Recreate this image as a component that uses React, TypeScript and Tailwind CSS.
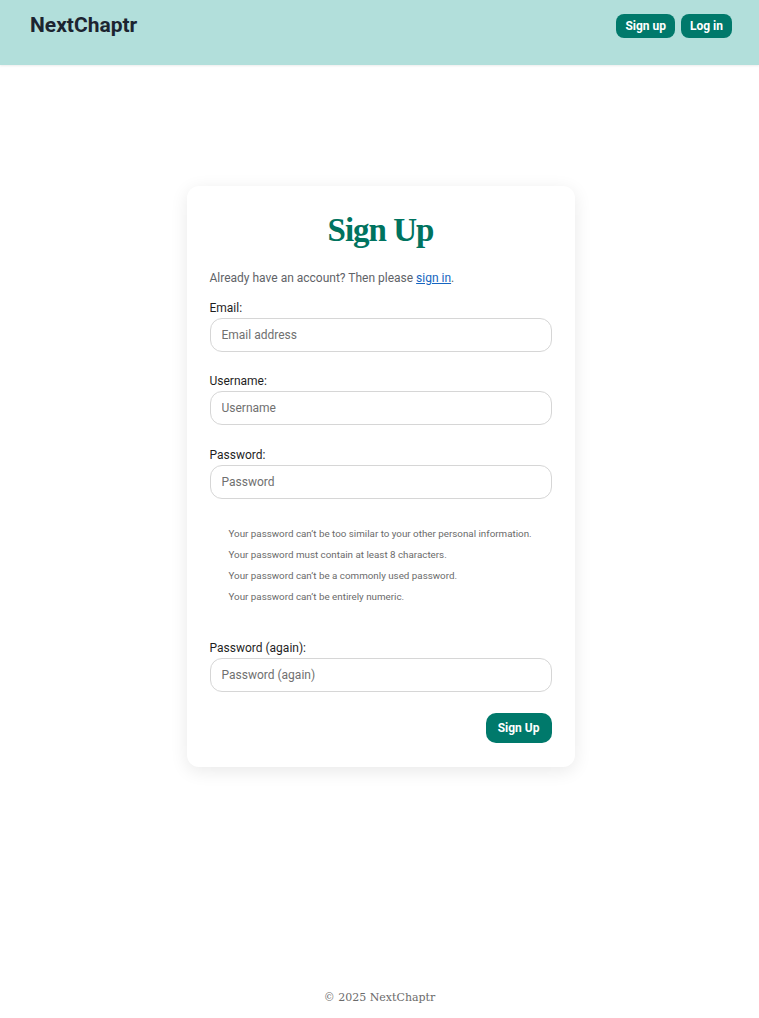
export default function App() {
  const rules = [
    "Your password can\u2019t be too similar to your other personal information.",
    "Your password must contain at least 8 characters.",
    "Your password can\u2019t be a commonly used password.",
    "Your password can\u2019t be entirely numeric.",
  ];

  return (
    <div className="flex min-h-[1018px] flex-col bg-white font-['Roboto',sans-serif]">
      <header className="h-[65px] bg-[#b2dfdb] shadow-[0_1px_2px_rgba(0,0,0,0.08)]">
        <div className="flex h-[24px] items-center justify-between pl-[30px] pr-[27px] mt-[14px]">
          <a className="text-[21px] font-bold text-[#1c2430]">NextChaptr</a>
          <nav className="flex gap-[6px]">
            <a className="flex h-[24px] items-center rounded-lg bg-[#00796b] px-[9px] text-[12px] font-bold text-white">
              Sign up
            </a>
            <a className="flex h-[24px] items-center rounded-lg bg-[#00796b] px-[9px] text-[12px] font-bold text-white">
              Log in
            </a>
          </nav>
        </div>
      </header>

      <main className="flex flex-1 justify-center pl-[2px]">
        <div className="mt-[121px] mb-auto w-[388px] rounded-xl bg-white px-[23px] pt-[24px] pb-[24px] shadow-[0_4px_18px_rgba(0,0,0,0.09)]">
          <h1 className="text-center font-['Liberation_Serif',serif] text-[33px] font-black leading-[41px] tracking-[-1px] text-[#00735f]">
            Sign Up
          </h1>
          <p className="mt-[17px] text-[12px] leading-[20px] text-[#5f6368]">
            Already have an account? Then please{" "}
            <a className="text-[#1565c0] underline">sign in</a>.
          </p>

          <form className="mt-[10px]">
            <Field label="Email:" placeholder="Email address" />
            <Field label="Username:" placeholder="Username" className="mt-[19px]" />
            <Field label="Password:" placeholder="Password" className="mt-[20px]" />

            <ul className="mt-[24px] pl-[19px] text-[9.8px] leading-[21px] text-[#6b6b6b]">
              {rules.map((r) => (
                <li key={r}>{r}</li>
              ))}
            </ul>

            <Field label="Password (again):" placeholder="Password (again)" className="mt-[31px]" />

            <div className="mt-[21px] flex justify-end">
              <button
                type="button"
                className="h-[30px] rounded-[10px] bg-[#00796b] px-[12px] text-[12px] font-bold text-white"
              >
                Sign Up
              </button>
            </div>
          </form>
        </div>
      </main>

      <footer className="pb-[12px] text-center font-['DejaVu_Serif',serif] text-[11px] text-[#6b6b6b]">
        © 2025 NextChaptr
      </footer>
    </div>
  );
}

function Field({
  label,
  placeholder,
  className = "",
}: {
  label: string;
  placeholder: string;
  className?: string;
}) {
  return (
    <div className={className}>
      <label className="block text-[12px] leading-[20px] text-[#1f1f1f]">{label}</label>
      <input
        placeholder={placeholder}
        className="block h-[34px] w-full rounded-[12px] border border-[#d6d6d6] px-[11px] text-[12px] text-[#333] outline-none placeholder:text-[#707070]"
      />
    </div>
  );
}
